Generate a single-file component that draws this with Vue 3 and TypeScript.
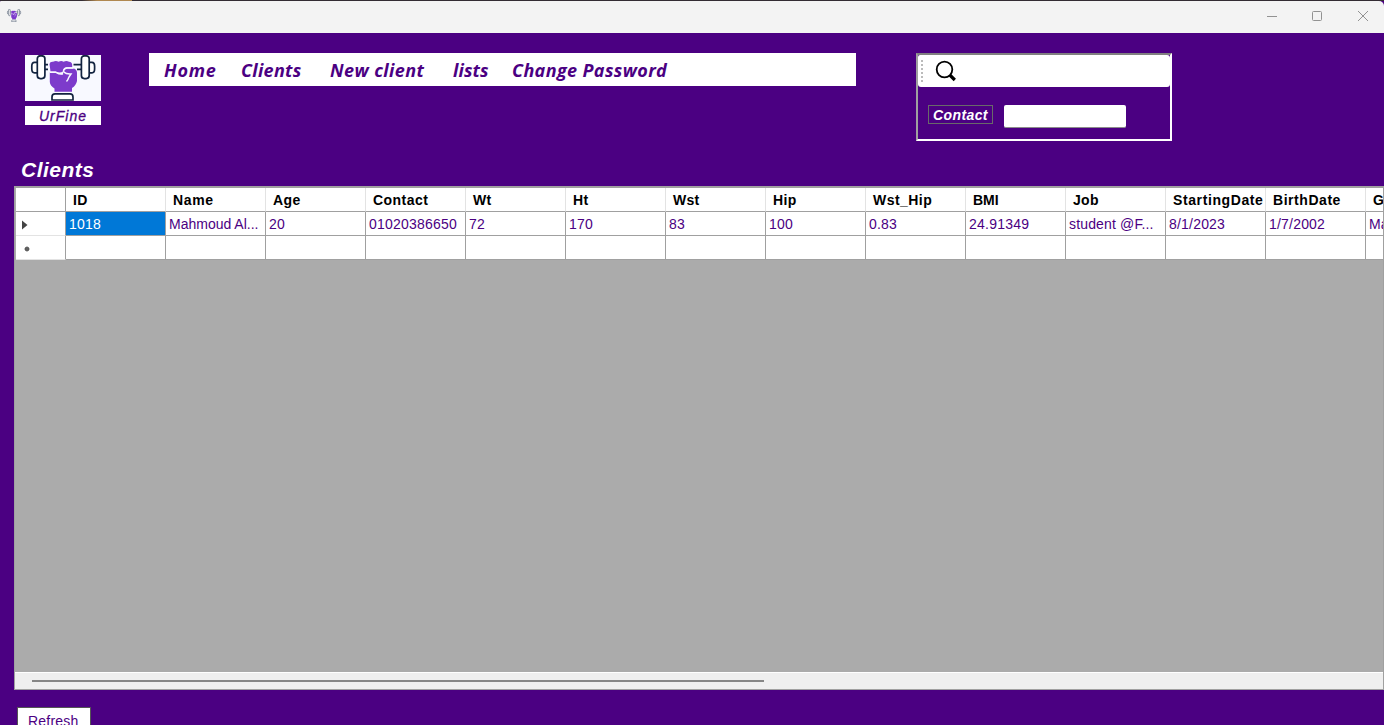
<script setup lang="ts">
interface Column {
  key: string
  title: string
  value: string
  titleSpacing: number
  valueSpacing: number
}

const columns: Column[] = [
  { key: 'id', title: 'ID', value: '1018', titleSpacing: 0.3, valueSpacing: 0.25 },
  { key: 'name', title: 'Name', value: 'Mahmoud Al...', titleSpacing: 0.65, valueSpacing: 0 },
  { key: 'age', title: 'Age', value: '20', titleSpacing: 0.4, valueSpacing: 0.2 },
  { key: 'contact', title: 'Contact', value: '01020386650', titleSpacing: 0.45, valueSpacing: 0.22 },
  { key: 'wt', title: 'Wt', value: '72', titleSpacing: 0.3, valueSpacing: 0.2 },
  { key: 'ht', title: 'Ht', value: '170', titleSpacing: 0.3, valueSpacing: 0.2 },
  { key: 'wst', title: 'Wst', value: '83', titleSpacing: 0.3, valueSpacing: 0.2 },
  { key: 'hip', title: 'Hip', value: '100', titleSpacing: 0.4, valueSpacing: 0.2 },
  { key: 'ratio', title: 'Wst_Hip', value: '0.83', titleSpacing: 0.45, valueSpacing: 0.2 },
  { key: 'bmi', title: 'BMI', value: '24.91349', titleSpacing: 0, valueSpacing: 0.25 },
  { key: 'job', title: 'Job', value: 'student @F...', titleSpacing: 0.3, valueSpacing: 0.15 },
  { key: 'start', title: 'StartingDate', value: '8/1/2023', titleSpacing: 0.6, valueSpacing: 0.2 },
  { key: 'birth', title: 'BirthDate', value: '1/7/2002', titleSpacing: 0.55, valueSpacing: 0.2 },
  { key: 'gender', title: 'Gender', value: 'Male', titleSpacing: 0.3, valueSpacing: 0.1 },
]

const menu = [
  { label: 'Home', width: 77, spacing: 0.8 },
  { label: 'Clients', width: 89, spacing: 0.3 },
  { label: 'New client', width: 123, spacing: 0.42 },
  { label: 'lists', width: 59, spacing: 0.1 },
  { label: 'Change Password', width: 170, spacing: 0.37 },
]
</script>

<template>
  <div class="window">
    <svg width="0" height="0" class="defs">
      <symbol id="fist" viewBox="0 0 76 46" preserveAspectRatio="none">
        <g fill="#fff" stroke="#12233f" stroke-width="1.700">
          <path d="M12 7.300H9.500Q6.800 7.300 6.800 11V14Q6.800 17.800 9.500 17.800H12" />
          <path d="M64.500 7.300H67Q69.600 7.300 69.600 11V14Q69.600 17.800 67 17.800H64.500" />
          <rect x="12.300" y=".8" width="7.600" height="22.800" rx="3" />
          <rect x="56.400" y=".8" width="7.800" height="22.800" rx="3" />
          <path d="M20 9.700H23M20 14.300H23M48.500 9.700H56M52 14.300H56" />
          <path d="M27 45V42Q27 38.800 30 38.800H45Q48 38.800 48 42V45Z" />
        </g>
        <path fill="#7d3bcb" d="M24.500 9Q25 6.300 28 6.700Q31 5.300 33.500 6.700Q36.500 5.300 38.500 6.700Q41.500 5.300 44 6.700Q47.200 7 47.200 10V12.300H41Q38 13 37.500 17Q34 18 30.500 16.500H25.500Z" />
        <path fill="#7d3bcb" d="M24.800 17H30Q34 20 38 19L38.500 15.500L41 13.500H49Q52 14.500 52 18V26Q51 30.500 47 33V36.700H29.500V33.500Q25 30.500 24.800 27Z" />
        <path fill="none" stroke="#f8f9ff" stroke-width="1.400" d="M24.500 17.300H31Q35 19.800 38 18.800M48.500 13H42Q38 14 38.800 17Q41 19.300 46 19Q44.500 21 43.500 23Q43 25 41.500 26.500" />
      </symbol>
    </svg>

    <div class="desktop-strip"><i class="tan"></i></div>
    <header class="titlebar">
      <svg class="app-icon"><use href="#fist" /></svg>
      <svg class="controls" width="110" height="14" viewBox="0 0 110 14" fill="none" stroke="#929292">
        <path d="M1 8.500H11" />
        <rect x="46.500" y="3.500" width="9" height="9" rx="1" />
        <path d="M92 3L102 13M102 3L92 13" />
      </svg>
    </header>

    <section class="top">
      <div class="brand">
        <svg class="logo"><use href="#fist" /></svg>
        <div class="brand-name">UrFine</div>
      </div>
      <nav class="menu">
        <span
          v-for="m in menu"
          :key="m.label"
          :style="{ width: m.width + 'px', letterSpacing: m.spacing + 'px' }"
        >{{ m.label }}</span>
      </nav>
      <div class="search-panel">
        <div class="toolbar">
          <i class="grip"></i>
          <svg width="22" height="22" viewBox="0 0 22 22" fill="none" stroke="#000">
            <circle cx="9.500" cy="9.500" r="7.800" stroke-width="1.800" />
            <path d="M14.800 15L19.800 20" stroke-width="3.200" />
          </svg>
        </div>
        <div class="filter">
          <label>Contact</label>
          <input type="text" />
        </div>
      </div>
    </section>

    <h1>Clients</h1>

    <div class="grid">
      <div class="row head">
        <div class="rowhead"></div>
        <div v-for="c in columns" :key="c.key" class="cell" :style="{ letterSpacing: c.titleSpacing + 'px' }">{{ c.title }}</div>
      </div>
      <div class="row data">
        <div class="rowhead">
          <svg width="6" height="10" viewBox="0 0 6 10"><path d="M0 0.500L5.500 5L0 9.500Z" fill="#444" /></svg>
        </div>
        <div
          v-for="(c, i) in columns"
          :key="c.key"
          class="cell"
          :class="{ selected: i === 0 }"
          :style="{ letterSpacing: c.valueSpacing + 'px' }"
        >{{ c.value }}</div>
      </div>
      <div class="row blank">
        <div class="rowhead">
          <svg width="6" height="6" viewBox="0 0 6 6"><circle cx="3" cy="3" r="2.100" fill="#444" /><path d="M3 0V6M0 3H6M1 1L5 5M5 1L1 5" stroke="#666" stroke-width=".7" /></svg>
        </div>
        <div v-for="c in columns" :key="c.key" class="cell"></div>
      </div>
      <div class="void"></div>
      <div class="scrollbar"><i class="thumb"></i></div>
    </div>

    <button class="refresh">Refresh</button>
  </div>
</template>

<style>
html, body { overflow: hidden; }
</style>

<style scoped>
.window {
  width: 1384px;
  height: 725px;
  overflow: hidden;
  background: #4b0082;
  font-family: "Liberation Sans", Arial, sans-serif;
  font-size: 14px;
  color: #4b0082;
  display: flex;
  flex-direction: column;
  box-sizing: border-box;
}
.window * { box-sizing: border-box; }
.defs { position: absolute; }
.desktop-strip { height: 1px; background: #332c33; flex: none; }
.tan { display: block; width: 50px; height: 1px; margin-left: 82px; background: linear-gradient(90deg, #332c33, #b08850 30%); }
.titlebar {
  height: 32px;
  flex: none;
  background: #f3f3f3;
  border-radius: 1px 5px 0 0;
  display: flex;
  justify-content: space-between;
  padding: 7px 8px 0 6px;
}
.app-icon { width: 16px; height: 13px; margin-top: 1px; }
.top {
  height: 121px;
  flex: none;
  display: flex;
  align-items: flex-start;
  padding: 20px 0 0 25px;
}
.brand { width: 76px; padding-top: 2px; margin-right: 48px; }
.logo { display: block; width: 76px; height: 46px; background: #f8f9ff; }
.brand-name {
  height: 19px;
  margin-top: 5px;
  background: #fff;
  text-align: center;
  font: italic 400 14px/20px "Liberation Sans", sans-serif;
  -webkit-text-stroke: 0.3px #4b0082;
  letter-spacing: 1px;
}
.menu {
  width: 707px;
  height: 33px;
  background: #fff;
  padding-left: 15px;
  display: flex;
  font: italic bold 18px/35px "Open Sans", "Noto Sans", sans-serif;
  white-space: nowrap;
}
.search-panel {
  width: 256px;
  height: 88px;
  margin-left: 60px;
  border: 2px solid;
  border-color: #808080 #fff #fff #a0a0a0;
}
.toolbar {
  width: 252px;
  height: 32px;
  background: #fff;
  border-radius: 2px 3px 3px 3px;
  display: flex;
  align-items: center;
  padding-left: 3px;
}
.grip {
  width: 2px;
  height: 22px;
  margin-right: 12px;
  background: repeating-linear-gradient(#bbb 0 2px, #fff 2px 4px);
}
.filter { display: flex; align-items: flex-start; padding: 18px 0 0 10px; }
.filter label {
  width: 65px;
  height: 19px;
  border: 1px solid #696969;
  color: #fff;
  padding-left: 4px;
  font: italic bold 14px/18px "Liberation Sans", sans-serif;
  letter-spacing: 0.4px;
  white-space: nowrap;
}
.filter input {
  width: 122px;
  height: 23px;
  margin-left: 11px;
  border: 0;
  border-bottom: 1px solid #8b8b8b;
  border-radius: 2px;
  background: #fff;
  padding: 0;
}
h1 {
  height: 32px;
  flex: none;
  margin: 0;
  padding-left: 21px;
  color: #fff;
  font: italic bold 21px/32px "Liberation Sans", sans-serif;
  letter-spacing: 0.5px;
}
.grid {
  margin-left: 14px;
  width: 1370px;
  height: 504px;
  flex: none;
  border: 1px solid #a0a0a0;
  border-top: 2px solid #a0a0a0;
  background: #ababab;
  overflow: hidden;
  display: flex;
  flex-direction: column;
}
.row { display: flex; height: 24px; flex: none; padding-left: 1px; }
.rowhead {
  width: 50px;
  flex: none;
  background: #fff;
  border-right: 1px solid #a0a0a0;
  border-bottom: 1px solid #a0a0a0;
  display: flex;
  align-items: center;
}
.data .rowhead, .blank .rowhead { border-bottom-color: #e3e3e3; }
.data .rowhead { padding: 2px 0 0 6px; }
.blank .rowhead { padding: 2px 0 0 8px; }
.cell {
  width: 100px;
  flex: none;
  background: #fff;
  border-right: 1px solid #a0a0a0;
  border-bottom: 1px solid #a0a0a0;
  padding-left: 3px;
  line-height: 25px;
  white-space: nowrap;
  overflow: hidden;
}
.head .cell {
  border-right-color: #e3e3e3;
  color: #000;
  font-weight: bold;
  padding-left: 7px;
}
.cell.selected { background: #0078d7; color: #fff; }
.void { flex: 1; }
.scrollbar {
  height: 17px;
  flex: none;
  border-top: 1px solid #fff;
  background: #efefef;
  padding: 7px 0 0 17px;
}
.thumb { display: block; width: 732px; height: 2px; background: #868686; }
.refresh {
  width: 74px;
  height: 27px;
  flex: none;
  margin: 17px 0 0 17px;
  padding: 0 0 0 10px;
  background: #fff;
  border: 1px solid #555;
  color: #4b0082;
  font: 14px/24px "Liberation Sans", sans-serif;
  letter-spacing: 0.2px;
  text-align: left;
}
</style>
